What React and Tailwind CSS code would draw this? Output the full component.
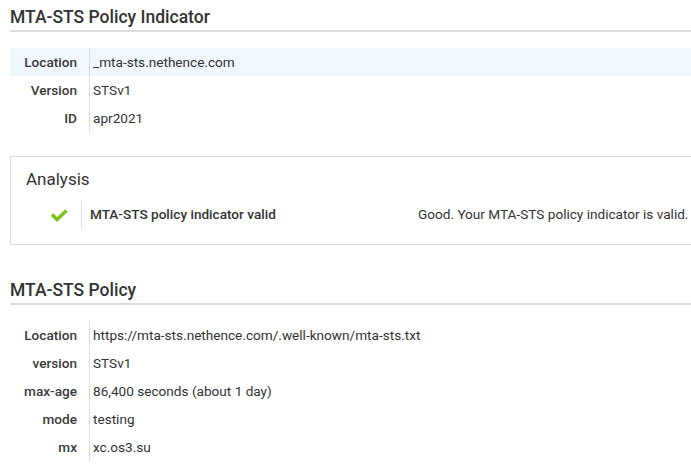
const indicator = [
  ['Location', '_mta-sts.nethence.com'],
  ['Version', 'STSv1'],
  ['ID', 'apr2021'],
]

const policy = [
  ['Location', 'https://mta-sts.nethence.com/.well-known/mta-sts.txt'],
  ['version', 'STSv1'],
  ['max-age', '86,400 seconds (about 1 day)'],
  ['mode', 'testing'],
  ['mx', 'xc.os3.su'],
]

function Heading({ children, className = '' }) {
  return (
    <h2 className={`pt-[5px] pb-px border-b-2 border-[#dddddd] text-[17.5px] leading-6 font-medium text-[#333333] ${className}`}>
      {children}
    </h2>
  )
}

function InfoTable({ rows, highlightFirst }) {
  return (
    <div className="mt-4 flex flex-col">
      {rows.map(([label, value], i) => (
        <div
          key={label}
          className={`flex h-7 items-center text-[13.6px] ${highlightFirst && i === 0 ? 'bg-[#f0f7fe]' : ''}`}
        >
          <div className="w-[67px] text-right font-medium text-[#3a3a3a]">{label}</div>
          <div className="ml-[12px] h-full border-l border-[#dddddd]" />
          <div className="pl-[3px] text-[#333333]">{value}</div>
        </div>
      ))}
    </div>
  )
}

function CheckIcon() {
  return (
    <svg width="18" height="14" viewBox="0 0 18 14">
      <path d="M2 5.5 L7 10.5 L16.5 1.5" fill="none" stroke="#80c21a" strokeWidth="3.6" strokeLinecap="butt" strokeLinejoin="miter" />
    </svg>
  )
}

export default function App() {
  return (
    <div className="min-h-screen bg-white pl-[10px] font-['Roboto',sans-serif] overflow-hidden">
      <Heading>MTA-STS Policy Indicator</Heading>
      <InfoTable rows={indicator} highlightFirst />

      {/* analysis box */}
      <div className="mt-6 border border-r-0 border-[#dddddd] pl-[15px] pt-[10px] pb-4">
        <div className="text-[17px] leading-6 text-[#333333]">Analysis</div>
        <div className="mt-[9px] flex h-7 items-center text-[13.6px]">
          <div className="flex w-[55px] justify-end pr-[13px] pt-[3px]">
            <CheckIcon />
          </div>
          <div className="h-full border-l border-[#dddddd]" />
          <div className="w-[336px] pl-2 font-medium text-[#333333]">MTA-STS policy indicator valid</div>
          <div className="whitespace-nowrap text-[#333333]">Good. Your MTA-STS policy indicator is valid.</div>
        </div>
      </div>

      <Heading className="mt-7">MTA-STS Policy</Heading>
      <InfoTable rows={policy} />
    </div>
  )
}
